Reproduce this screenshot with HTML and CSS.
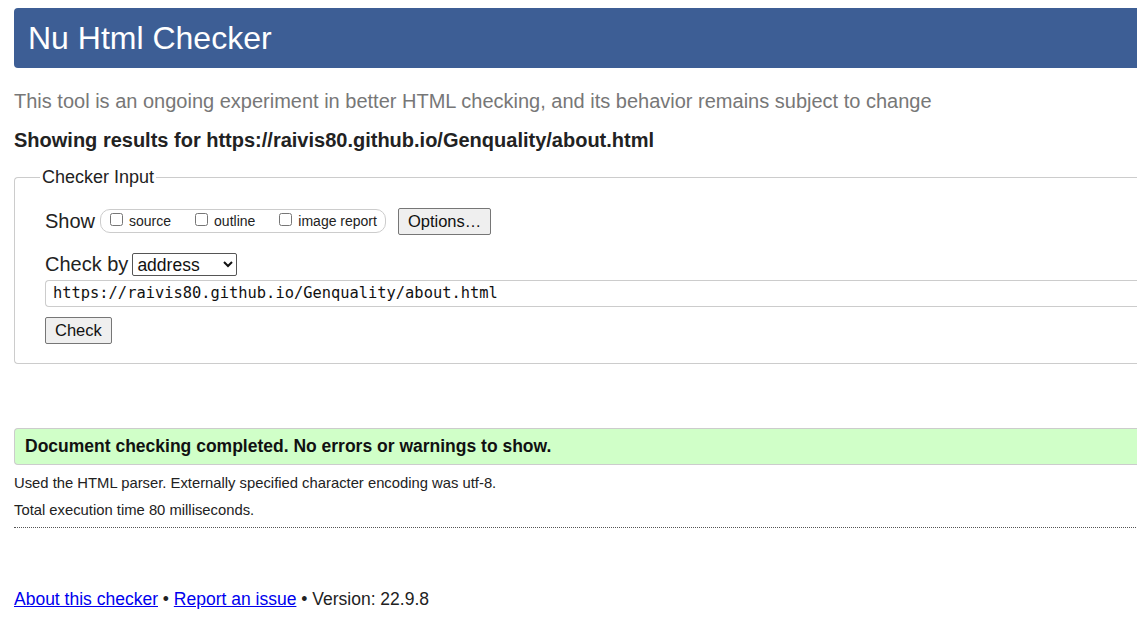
FILE: index.html
```html
<!DOCTYPE html>
<html>
<head>
<meta charset="utf-8">
<title>Nu Html Checker</title>
<link rel="stylesheet" href="styles.css">
</head>
<body>
<div class="page">
  <h1 class="banner">Nu Html Checker</h1>
  <p class="tagline">This tool is an ongoing experiment in better HTML checking, and its behavior remains subject to change</p>
  <p class="showing">Showing results for https://raivis80.github.io/Genquality/about.html</p>
  <form class="checker">
    <fieldset class="box">
      <legend class="legend">Checker Input</legend>
      <div class="row show-row">
        <span class="label">Show</span>
        <span class="pill">
          <label class="opt"><input type="checkbox" class="cb">source</label>
          <label class="opt"><input type="checkbox" class="cb">outline</label>
          <label class="opt"><input type="checkbox" class="cb">image report</label>
        </span>
        <button type="button" class="btn options">Options…</button>
      </div>
      <div class="row by-row">
        <span class="label">Check by</span>
        <select class="sel"><option>address</option></select>
      </div>
      <div class="url">https://raivis80.github.io/Genquality/about.html</div>
      <button type="button" class="btn check">Check</button>
    </fieldset>
  </form>
  <p class="success">Document checking completed. No errors or warnings to show.</p>
  <p class="details">Used the HTML parser. Externally specified character encoding was utf-8.</p>
  <p class="details">Total execution time 80 milliseconds.</p>
  <hr class="rule">
  <p class="footer"><a href="#" class="link">About this checker</a> • <a href="#" class="link">Report an issue</a> • Version: 22.9.8</p>
</div>
</body>
</html>
```

FILE: styles.css
```css
html {
  overflow: hidden;
}
body {
  margin: 0;
  background: #fff;
  font-family: "Liberation Sans", Arial, sans-serif;
  color: #222;
}
.page {
  width: 1300px;
  padding: 8px 0 0 14px;
}
.banner {
  margin: 0;
  height: 60px;
  box-sizing: border-box;
  padding: 0 0 0 14px;
  background: #3d5e95;
  color: #fff;
  font-weight: normal;
  font-size: 32px;
  line-height: 60px;
  border-radius: 4px 0 0 4px;
}
.tagline {
  margin: 21px 0 0 0;
  font-size: 20px;
  line-height: 24px;
  color: #777;
}
.showing {
  margin: 15px 0 0 0;
  font-size: 20px;
  line-height: 24px;
  font-weight: bold;
  color: #222;
}
.checker {
  margin: 15px 0 0 0;
}
.box {
  margin: 0;
  border: 1px solid #ccc;
  border-right: none;
  border-radius: 4px 0 0 4px;
  padding: 19px 0 19px 30px;
}
.legend {
  margin-left: -5px;
  padding: 0 2px;
  font-size: 18px;
  color: #222;
}
.row {
  display: flex;
  align-items: center;
}
.label {
  font-size: 20px;
  color: #222;
}
.show-row {
  height: 28px;
}
.pill {
  display: inline-flex;
  align-items: center;
  margin-left: 5px;
  height: 24px;
  box-sizing: border-box;
  border: 1px solid #ccc;
  border-radius: 10px;
  padding: 0 8px 0 7px;
  gap: 22px;
}
.opt {
  display: inline-flex;
  align-items: center;
  font-size: 14px;
  color: #222;
}
.cb {
  margin: 0 6px 3px 2px;
  width: 13px;
  height: 13px;
}
.btn {
  font-family: "Liberation Sans", Arial, sans-serif;
  font-size: 16.5px;
  color: #111;
  background: #efefef;
  border: 1px solid #767676;
  border-radius: 2px;
  padding: 0 9px;
  height: 27px;
}
.options {
  margin-left: 12px;
}
.by-row {
  margin-top: 17px;
  height: 24px;
}
.sel {
  margin-left: 4px;
  width: 105px;
  height: 23px;
  font-family: "Liberation Sans", Arial, sans-serif;
  font-size: 17.5px;
  color: #111;
  border: 1px solid #555;
  border-radius: 2px;
  background: #fff;
}
.url {
  margin-top: 4px;
  height: 27px;
  box-sizing: border-box;
  border: 1px solid #ccc;
  border-right: none;
  border-radius: 4px 0 0 4px;
  padding: 0 0 0 7px;
  font-family: "DejaVu Sans Mono", "Liberation Mono", monospace;
  font-size: 15.4px;
  line-height: 25px;
  color: #111;
}
.check {
  display: block;
  margin-top: 10px;
  height: 27px;
}
.success {
  margin: 64px 0 0 0;
  height: 37px;
  box-sizing: border-box;
  border: 1px solid #ccc;
  border-right: none;
  border-radius: 4px 0 0 4px;
  background: #d0ffc8;
  padding: 0 0 0 10px;
  font-size: 17.5px;
  font-weight: bold;
  line-height: 35px;
  color: #111;
}
.details {
  margin: 0;
  padding-top: 9px;
  font-size: 14.8px;
  line-height: 18px;
  color: #222;
}
.rule {
  margin: 8px 0 0 0;
  border: none;
  border-top: 1px dotted #555;
  height: 0;
}
.footer {
  margin: 61px 0 0 0;
  font-size: 17.5px;
  line-height: 20px;
  color: #222;
}
.link {
  color: #0000ee;
}
```
